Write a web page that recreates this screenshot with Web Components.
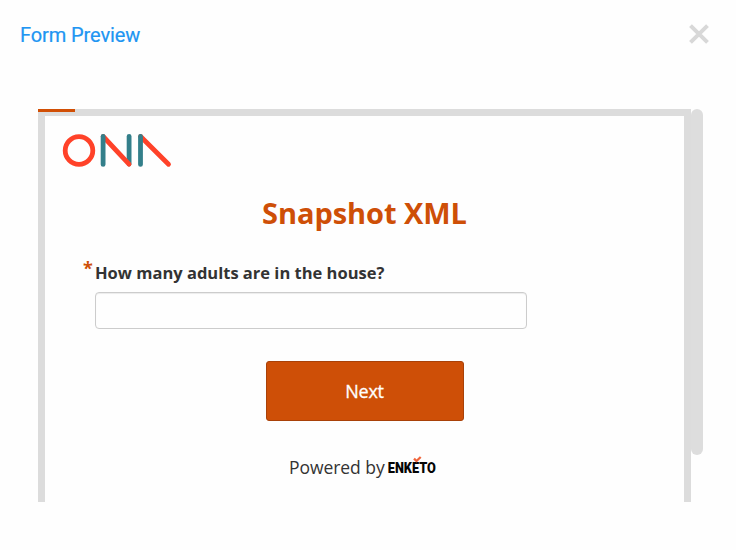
<!DOCTYPE html>
<html lang="en">
<head>
<meta charset="utf-8">
<title>Form Preview</title>
<style>
  html, body { margin: 0; height: 100%; background: #fefefe; overflow: hidden; }
  body { font-family: "Open Sans", "Noto Sans", sans-serif; color: #333; }
</style>
</head>
<body>
<preview-dialog heading="Form Preview">
  <form-frame>
    <ona-logo></ona-logo>
    <form-title>Snapshot XML</form-title>
    <form-question>How many adults are in the house?</form-question>
    <form-button>Next</form-button>
    <powered-by>Powered by</powered-by>
  </form-frame>
</preview-dialog>
<script>
const define = (name, html, setup) => {
  const template = document.createElement('template');
  template.innerHTML = html;
  customElements.define(name, class extends HTMLElement {
    constructor() {
      super();
      this.attachShadow({ mode: 'open' }).append(template.content.cloneNode(true));
    }
    connectedCallback() { if (setup) setup(this, this.shadowRoot); }
  });
};

define('preview-dialog', `
  <style>
    :host { display: block; width: 736px; height: 550px; box-sizing: border-box; }
    header { display: flex; justify-content: space-between; height: 109px; padding: 23px 26px 0 20px; box-sizing: border-box; }
    h1 { margin: 0; font: 400 20px/24px Roboto, sans-serif; letter-spacing: -.1px; color: #2095f2; -webkit-text-stroke: .2px #2095f2; white-space: nowrap; }
    svg { display: block; margin-top: 1px; }
    main { padding: 0 33px 0 38px; }
  </style>
  <header>
    <h1></h1>
    <svg width="22" height="20" viewBox="0 0 22 20" role="img" aria-label="Close"><path d="M2.5 1.6 19.5 18.4M19.5 1.6 2.5 18.4" stroke="#d8d8d8" stroke-width="4" fill="none"/></svg>
  </header>
  <main><slot></slot></main>`,
  (el, root) => { root.querySelector('h1').textContent = el.getAttribute('heading'); });

define('form-frame', `
  <style>
    :host { display: flex; height: 393px; align-items: flex-start; }
    .frame { width: 653px; height: 393px; box-sizing: border-box; background: #fefefe; border: 7px solid #dcdcdc; border-bottom: 0; position: relative; }
    .progress { position: absolute; left: -7px; top: -7px; width: 37px; height: 3px; background: #d14f05; }
    .scroll { width: 12px; height: 346px; border-radius: 6px; background: #dddddd; }
  </style>
  <div class="frame"><div class="progress"></div><slot></slot></div>
  <div class="scroll"></div>`);

define('ona-logo', `
  <style>
    :host { display: block; padding: 17px 0 0 17px; height: 36px; }
    svg { display: block; }
  </style>
  <svg width="112" height="36" viewBox="0 0 112 36" fill="none" stroke-width="4.8" stroke-linecap="round" role="img" aria-label="ONA">
    <circle cx="17" cy="17.5" r="13.8" stroke="#ff4229"/>
    <path d="M67.1 3.5V31" stroke="#337f8a"/>
    <path d="M41.2 3.5 67 31.2M78.6 3.5 106.5 31.2" stroke="#ff4229"/>
    <path d="M41.1 3.5V31.4M78.5 3.5V31.4" stroke="#337f8a"/>
  </svg>`);

define('form-title', `
  <style>
    :host { display: block; padding-top: 23px; height: 43px; text-align: center; font-size: 29px; letter-spacing: -.05px; line-height: 42px; font-weight: 700; color: #ce4f07; white-space: nowrap; }
  </style><slot></slot>`);

define('form-question', `
  <style>
    :host { display: block; padding: 26px 0 0 50px; }
    label { display: block; position: relative; font-weight: 700; font-size: 16.5px; line-height: 24px; color: #333; white-space: nowrap; height: 31px; }
    .star { position: absolute; left: -12px; top: -4px; color: #ce4f07; font-size: 18px; line-height: 22px; }
    input { display: block; width: 432px; height: 37px; box-sizing: border-box; margin: 0; padding: 6px 12px; border: 1px solid #ccc; border-radius: 4px; background: #fefefe; box-shadow: inset 0 1px 1px rgba(0,0,0,.075); font: inherit; }
  </style>
  <label for="answer"><span class="star">*</span><slot></slot></label>
  <input id="answer" type="text">`);

define('form-button', `
  <style>
    :host { display: flex; justify-content: center; padding-top: 32px; }
    button { width: 198px; height: 60px; box-sizing: border-box; padding: 0; border: 1px solid #a94108; border-radius: 3px; background: #ce4f07; color: #fff; font: 400 18px/27px "Open Sans", sans-serif; letter-spacing: -.2px; -webkit-text-stroke: .3px #fff; }
  </style><button type="button"><slot></slot></button>`);

define('powered-by', `
  <style>
    :host { display: flex; padding: 33px 0 0 244px; height: 27px; font-size: 17.5px; letter-spacing: -.05px; line-height: 27px; white-space: nowrap; }
    .label { width: 98px; }
    svg { display: block; overflow: visible; }
    text { font: 900 14.5px Roboto, sans-serif; }
  </style>
  <span class="label"><slot></slot></span>
  <svg width="52" height="27" viewBox="0 0 52 27">
    <text x="0.8" y="19" textLength="48" lengthAdjust="spacingAndGlyphs" fill="#050505">ENKETO</text>
    <path d="m27 4.6 2.5 2.4 4.2-4" fill="none" stroke="#f0643a" stroke-width="2.3"/>
  </svg>`);
</script>
</body>
</html>
